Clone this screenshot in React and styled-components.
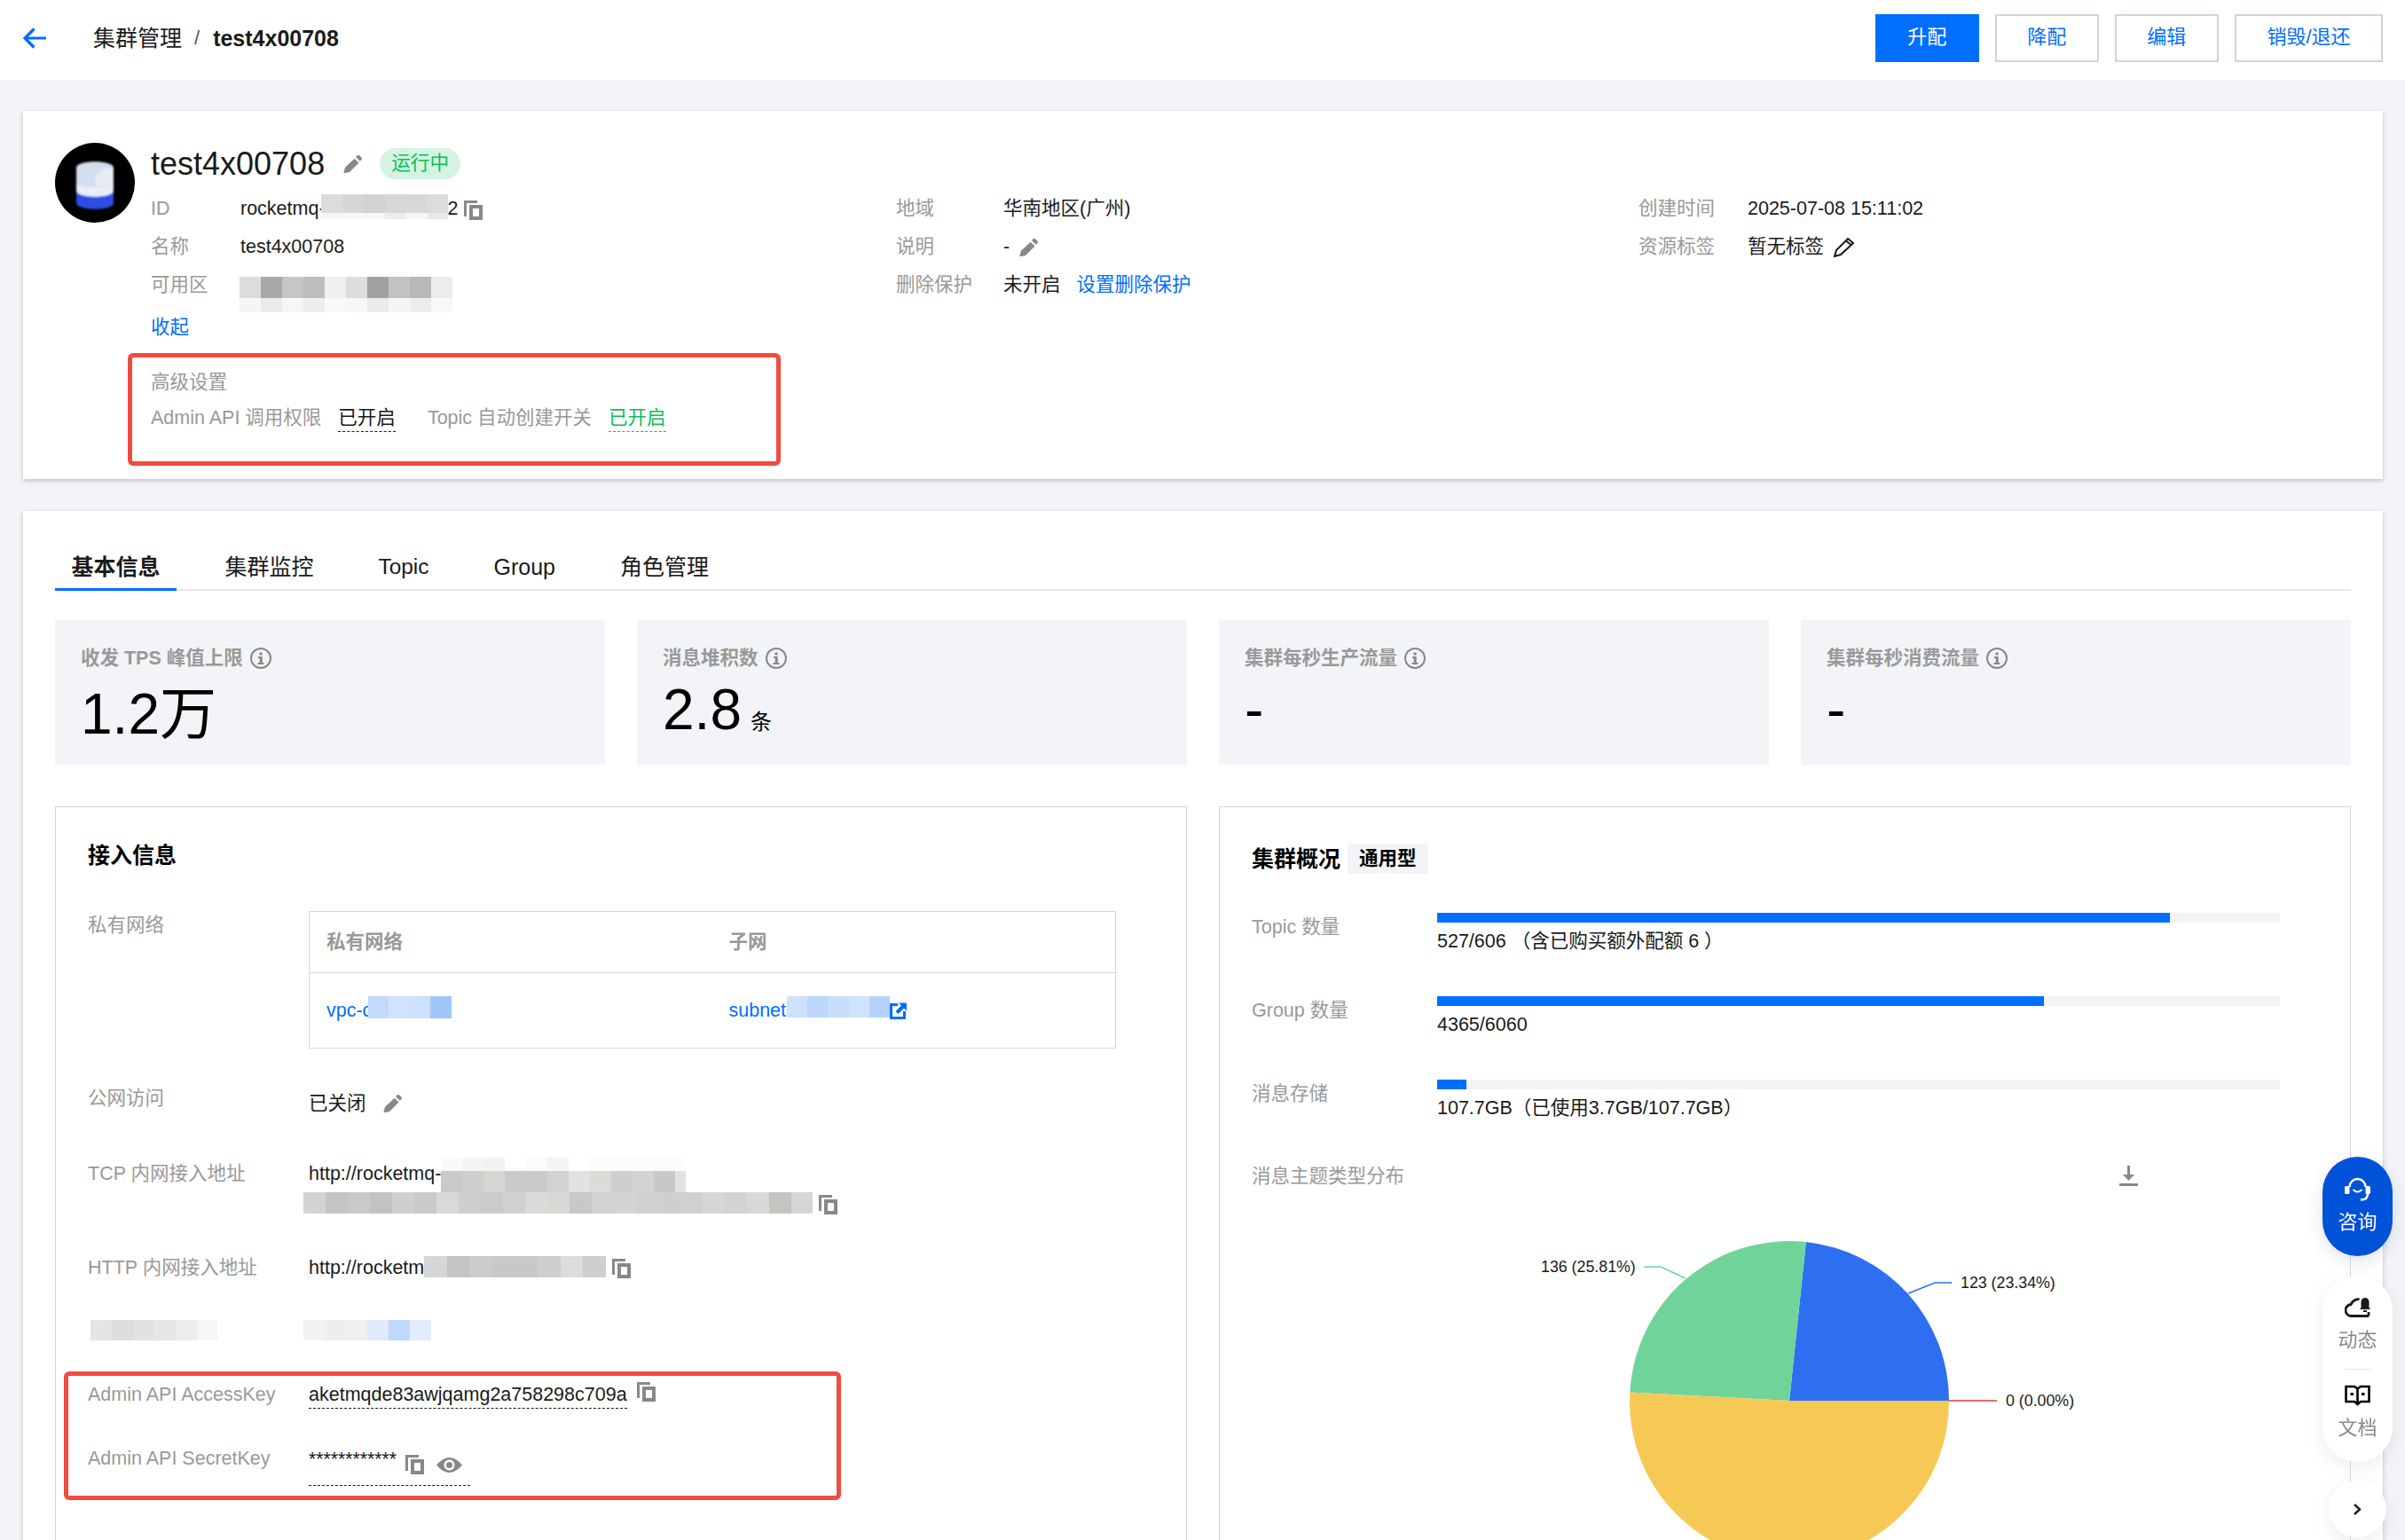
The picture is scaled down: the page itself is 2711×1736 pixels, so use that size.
import React from 'react';
import styled, { createGlobalStyle } from 'styled-components';

const GlobalStyle = createGlobalStyle`
	html, body {
		margin: 0;
		background: #f3f4f7;
	}
	body {
		font-family: "Liberation Sans", "Noto Sans CJK SC", sans-serif;
		font-size: 21.5px;
		color: #1a1a1a;
	}
	* {
		box-sizing: border-box;
	}
`;

const Page = styled.div`
	height: 1736px;
	overflow: hidden;
`;

const Header = styled.header`
	display: flex;
	align-items: center;
	height: 90px;
	padding: 0 25px 4px 26px;
	line-height: 30px;
	background: #fff;
`;

const BackArrow = styled.svg`
	width: 26px;
	height: 24px;
	margin-right: 53px;
`;

const Crumb = styled.span`
	font-size: 25px;
	font-weight: ${p => (p.$current ? 700 : 400)};
`;

const CrumbSep = styled.span`
	margin: 0 15px 0 14px;
	font-size: 22px;
	color: #555;
`;

const Actions = styled.div`
	display: flex;
	gap: 18px;
	margin-left: auto;
`;

const Button = styled.button`
	height: 54px;
	padding: 0 34.5px 3px;
	font: inherit;
	font-size: 22px;
	color: ${p => (p.$primary ? '#fff' : '#006eff')};
	background: ${p => (p.$primary ? '#006eff' : '#fff')};
	border: 2px solid ${p => (p.$primary ? '#006eff' : '#cfd5de')};
`;

const Main = styled.main`
	display: flex;
	flex-direction: column;
	gap: 36px;
	padding: 35px 25px 0 26px;
`;

const Card = styled.section`
	padding: ${p => p.$padding};
	background: #fff;
	box-shadow: 0 2px 5px rgba(54, 58, 80, 0.28);
`;

const Summary = styled.div`
	display: flex;
	gap: 18px;
`;

const Avatar = styled.svg`
	flex: none;
	width: 90px;
	height: 90px;
`;

const SummaryBody = styled.div`
	flex: 1;
	padding-top: 6px;
`;

const TitleRow = styled.div`
	display: flex;
	align-items: center;
	height: 35px;
	margin-bottom: 12px;
`;

const Title = styled.h1`
	margin: 0 21px 0 0;
	font-size: 36px;
	font-weight: 400;
	line-height: 35px;
`;

const StatusTag = styled.span`
	height: 35px;
	margin-left: 20px;
	padding: 0 13px;
	line-height: 34px;
	font-size: 21.7px;
	color: #0abf5b;
	background: #d5f3e1;
	border-radius: 18px;
`;

const InfoGrid = styled.div`
	display: grid;
	grid-template-columns: 840px 837px 1fr;
`;

const InfoRow = styled.div`
	display: flex;
	align-items: center;
	height: 43px;
	line-height: 43px;
`;

const InfoLabel = styled.span`
	flex: none;
	width: ${p => p.$width}px;
	color: #999;
`;

const InfoValue = styled.span`
	display: flex;
	align-items: center;
`;

const Link = styled.a`
	color: #006eff;
`;

const InlineLink = styled(Link)`
	margin-left: 18px;
`;

const Toggle = styled(Link)`
	display: block;
	margin-top: 5px;
	line-height: 43px;
`;

const Mosaic = styled.span`
	flex: none;
	display: block;
	align-self: flex-start;
	width: ${p => p.$width}px;
	height: ${p => p.$top + p.$bottom}px;
	margin: ${p => p.$margin || '0'};
	background:
		${p => p.$upper} 0 0 / 100% ${p => p.$top}px no-repeat,
		${p => p.$lower} 0 ${p => p.$top}px / 100% ${p => p.$bottom}px no-repeat;
`;

const Callout = styled.div`
	border: 5px solid #f04c40;
	border-radius: 6px;
`;

const SettingsCallout = styled(Callout)`
	width: 736px;
	height: 127px;
	margin: 7px 0 0 -26px;
	padding: 12.5px 0 0 21px;
`;

const SettingsTitle = styled.div`
	line-height: 30px;
	color: #999;
`;

const SettingsRow = styled.div`
	display: flex;
	align-items: flex-start;
	margin-top: 10px;
	color: #999;
	line-height: 30px;
`;

const DottedValue = styled.span`
	height: 31px;
	margin: 0 ${p => p.$after || 0}px 0 19px;
	color: ${p => p.$color || '#1a1a1a'};
	border-bottom: 1.5px dashed currentColor;
`;

const Tabs = styled.nav`
	display: flex;
	gap: 36px;
	margin-bottom: 33px;
	border-bottom: 2px solid #e7eaef;
`;

const Tab = styled.a`
	margin-bottom: -2px;
	padding: 0 18.5px 2px;
	font-size: ${p => p.$size || 25}px;
	font-weight: ${p => (p.$active ? 700 : 400)};
	line-height: 44px;
	border-bottom: 3px solid ${p => (p.$active ? '#006eff' : 'transparent')};
`;

const Stats = styled.div`
	display: grid;
	grid-template-columns: repeat(4, 1fr);
	gap: 36px;
	margin-bottom: 47px;
`;

const Stat = styled.div`
	height: 163px;
	padding: 28px 29px 0;
	background: #f3f4f7;
`;

const StatLabel = styled.div`
	display: flex;
	align-items: center;
	gap: 8px;
	font-weight: 700;
	line-height: 30px;
	color: #999;
`;

const StatValue = styled.div`
	display: flex;
	align-items: baseline;
	margin-top: ${p => p.$top || 11}px;
	font-size: 64px;
	line-height: 64px;
	color: #000;
`;

const StatUnit = styled.span`
	margin-left: 10px;
	font-size: 24px;
`;

const Panels = styled.div`
	display: grid;
	grid-template-columns: 1fr 1fr;
	gap: 36px;
`;

const Panel = styled.div`
	height: 900px;
	padding: ${p => p.$padding};
	border: 1px solid #d3d6de;
`;

const PanelTitle = styled.h2`
	display: flex;
	align-items: center;
	margin: 0 0 ${p => p.$bottom || 0}px;
	font-size: 25px;
	line-height: 34px;
	color: #000;
`;

const KindTag = styled.span`
	height: 34px;
	margin-left: 8px;
	padding: 0 13px;
	font-size: 21.5px;
	background: #f3f4f7;
`;

const FieldRow = styled.div`
	display: grid;
	grid-template-columns: 249px 1fr;
	margin-top: ${p => p.$top}px;
	line-height: 32px;
`;

const FieldLabel = styled.div`
	color: #999;
`;

const FieldValue = styled.div`
	display: flex;
	flex-wrap: wrap;
	align-items: ${p => p.$align || 'center'};
	padding-top: ${p => p.$nudge || 0}px;
`;

const NetTable = styled.table`
	width: 910px;
	height: 155px;
	table-layout: fixed;
	border-collapse: collapse;
	border: 1px solid #d3d6de;
	th, td {
		padding: 0 19px;
		text-align: left;
	}
	th {
		height: 69px;
		color: #999;
		border-bottom: 1px solid #d3d6de;
	}
	th:first-child {
		width: 454px;
	}
	td {
		color: #006eff;
	}
`;

const TableLink = styled.span`
	display: flex;
	align-items: center;
`;

const KeyCallout = styled(Callout)`
	width: 876px;
	height: 145px;
	margin: 35px 0 0 -27px;
	padding: 5.5px 0 0 22px;
`;

const KeyText = styled.span`
	height: 32px;
	border-bottom: 1.5px dashed #1a1a1a;
`;

const SecretValue = styled.span`
	display: flex;
	align-items: flex-start;
	gap: 10px;
	width: 182px;
	height: 47px;
	padding-top: 1px;
	border-bottom: 1.5px dashed #1a1a1a;
`;

const Stars = styled.span`
	font-size: 21.2px;
`;

const Usage = styled.div`
	display: grid;
	grid-template-columns: 209px 950px;
	height: 94px;
	line-height: 32px;
`;

const Track = styled.div`
	height: 11px;
	background: #f3f4f7;
`;

const Fill = styled.div`
	height: 100%;
	background: #006eff;
`;

const UsageText = styled.div`
	margin-top: 6px;
	line-height: 30px;
`;

const ChartHead = styled.div`
	display: flex;
	justify-content: space-between;
	width: 999px;
	margin-top: -1px;
	line-height: 32px;
	color: #999;
`;

const PieChart = styled.svg`
	display: block;
	width: 1150px;
	height: 500px;
	text {
		font-family: "Liberation Sans", sans-serif;
		font-size: 17.8px;
		fill: #1a1a1a;
	}
`;

const Dock = styled.aside`
	position: fixed;
	top: 1304px;
	right: 14px;
	display: flex;
	flex-direction: column;
	align-items: center;
	width: 79px;
`;

const ConsultButton = styled.div`
	display: flex;
	flex-direction: column;
	align-items: center;
	width: 79px;
	height: 112px;
	padding-top: 22px;
	font-size: 22px;
	line-height: 30px;
	color: #fff;
	background: #0052d9;
	border-radius: 40px;
	box-shadow: 0 6px 20px rgba(0, 40, 120, 0.12);
`;

const ToolPill = styled.div`
	display: flex;
	flex-direction: column;
	align-items: center;
	width: 79px;
	height: 210px;
	margin-top: 22px;
	padding-top: 25px;
	font-size: 22px;
	line-height: 30px;
	color: #888;
	background: #fff;
	border-radius: 40px;
	box-shadow: 0 6px 24px rgba(0, 20, 60, 0.08);
`;

const ToolDivider = styled.div`
	width: 29px;
	height: 1px;
	margin: 17px 0;
	background: #e7eaef;
`;

const ToolLabel = styled.span`
	margin-top: ${p => p.$top}px;
`;

const CollapseButton = styled.div`
	display: flex;
	align-items: center;
	justify-content: center;
	width: 65px;
	height: 64px;
	margin-top: 21px;
	background: #fff;
	border-radius: 50%;
	box-shadow: 0 6px 24px rgba(0, 20, 60, 0.08);
`;

const Icon = styled.svg`
	flex: none;
	display: block;
	width: ${p => p.$w}px;
	height: ${p => p.$h}px;
	margin: ${p => p.$margin || '0'};
`;

const stripes = (colors, cell = 24) =>
	`linear-gradient(90deg, ${colors
		.map((c, i) => `${c} ${i * cell}px ${(i + 1) * cell}px`)
		.join(', ')})`;

const BLANK = stripes(['#fff']);

const CopyIcon = ({ margin }) => (
	<Icon $w={21} $h={22} $margin={margin} viewBox="0 0 21 22">
		<path fill="#888" d="M0 0h15v3H3v15H0z" />
		<path fill="#888" fillRule="evenodd" d="M6 5h15v17H6zM10 9v9h7V9z" />
	</Icon>
);

const PencilIcon = ({ margin }) => (
	<Icon $w={21} $h={20} $margin={margin} viewBox="0 0 21 20">
		<path fill="#888" d="M15.500.500a2 2 0 0 1 2.800 0l2 2a2 2 0 0 1 0 2.800l-1.500 1.500-4.800-4.800z" />
		<path fill="#888" d="M12.700 3.700l4.800 4.800L7 19 1.500 20.200a.8.8 0 0 1-1-1L2 13.700z" />
	</Icon>
);

const InfoIcon = () => (
	<Icon $w={24} $h={24} viewBox="0 0 24 24">
		<circle cx="12" cy="12" r="11" fill="none" stroke="#888" strokeWidth="2" />
		<rect x="10.500" y="5.500" width="3" height="3" fill="#888" />
		<path fill="#888" d="M9 10h4.700v7H15.500v2H8.500v-2h2.200v-5H9z" />
	</Icon>
);

const PIE_COLORS = { blue: '#2e6ff2', green: '#70d49a', yellow: '#f6c955', red: '#ee6b60' };

export default function App() {
	return (
		<Page>
			<GlobalStyle />
			<Header>
				<BackArrow viewBox="0 0 26 24">
					<path d="M12.500 1.500L2 12l10.500 10.500M2 12h24" fill="none" stroke="#006eff" strokeWidth="3.200" />
				</BackArrow>
				<Crumb>集群管理</Crumb>
				<CrumbSep>/</CrumbSep>
				<Crumb $current>test4x00708</Crumb>
				<Actions>
					<Button $primary>升配</Button>
					<Button>降配</Button>
					<Button>编辑</Button>
					<Button>销毁/退还</Button>
				</Actions>
			</Header>

			<Main>
				<Card $padding="36px 36px 15px 36px">
					<Summary>
						<Avatar viewBox="0 0 90 90">
							<defs>
								<filter id="soft"><feGaussianBlur stdDeviation="0.8" /></filter>
							</defs>
							<circle cx="45" cy="45" r="45" fill="#000" />
							<g filter="url(#soft)">
								<path d="M24 52v16c0 9 42 9 42 0V52z" fill="#2c50e2" />
								<path d="M24 40v14c0 9 42 9 42 0V40z" fill="#e9edf6" />
								<path d="M24 28v16c0 8 42 8 42 0V28c0-9-42-9-42 0z" fill="#d3deef" />
								<path d="M45 48c0-10 2-18 21-20v16c0 3-10 5-21 4z" fill="#e6ecf6" />
							</g>
						</Avatar>
						<SummaryBody>
							<TitleRow>
								<Title>test4x00708</Title>
								<PencilIcon />
								<StatusTag>运行中</StatusTag>
							</TitleRow>
							<InfoGrid>
								<div>
									<InfoRow>
										<InfoLabel $width={101}>ID</InfoLabel>
										<InfoValue>
											rocketmq-
											<Mosaic
												$width={143}
												$top={21}
												$bottom={7}
												$margin="5px 0 0 -5px"
												$upper={stripes(['#dcdcdc', '#d6d6d6', '#d2d2d2', '#d8d6d6', '#d6d7da', '#dcdcdc'])}
												$lower={stripes(['#f5f5f5', '#f7f7f7', '#f5f5f5', '#ececec', '#f5f5f5', '#e8e8e8'])}
											/>
											2
											<CopyIcon margin="3px 0 0 6px" />
										</InfoValue>
									</InfoRow>
									<InfoRow>
										<InfoLabel $width={101}>名称</InfoLabel>
										<InfoValue>test4x00708</InfoValue>
									</InfoRow>
									<InfoRow>
										<InfoLabel $width={100}>可用区</InfoLabel>
										<Mosaic
											$width={240}
											$top={24}
											$bottom={16}
											$margin="12px 0 0 0"
											$upper={stripes(['#dcdcdc', '#a9a9ac', '#c6c6c9', '#bdbdbb', '#eeeff3', '#dddddf', '#a2a2a5', '#c2c2c5', '#b8b8ba', '#ebecf0'])}
											$lower={stripes(['#f5f5f6', '#ebebed', '#f6f6f7', '#ededee', '#f9f9fa', '#f7f7f8', '#ebebed', '#f5f5f6', '#ececee', '#f8f8f9'])}
										/>
									</InfoRow>
								</div>
								<div>
									<InfoRow>
										<InfoLabel $width={121}>地域</InfoLabel>
										<InfoValue>华南地区(广州)</InfoValue>
									</InfoRow>
									<InfoRow>
										<InfoLabel $width={121}>说明</InfoLabel>
										<InfoValue>-<PencilIcon margin="0 0 0 11px" /></InfoValue>
									</InfoRow>
									<InfoRow>
										<InfoLabel $width={121}>删除保护</InfoLabel>
										<InfoValue>未开启<InlineLink>设置删除保护</InlineLink></InfoValue>
									</InfoRow>
								</div>
								<div>
									<InfoRow>
										<InfoLabel $width={123}>创建时间</InfoLabel>
										<InfoValue>2025-07-08 15:11:02</InfoValue>
									</InfoRow>
									<InfoRow>
										<InfoLabel $width={123}>资源标签</InfoLabel>
										<InfoValue>
											暂无标签
											<Icon $w={25} $h={23} $margin="0 0 0 10px" viewBox="0 0 25 23">
												<path d="M17 2l6 5L9 20l-7 2 2-7zM15 4.500l6 5" fill="none" stroke="#1a1a1a" strokeWidth="2" />
											</Icon>
										</InfoValue>
									</InfoRow>
								</div>
							</InfoGrid>
							<Toggle>收起</Toggle>
							<SettingsCallout>
								<SettingsTitle>高级设置</SettingsTitle>
								<SettingsRow>
									Admin API 调用权限
									<DottedValue $after={36}>已开启</DottedValue>
									Topic 自动创建开关
									<DottedValue $color="#0abf5b">已开启</DottedValue>
								</SettingsRow>
							</SettingsCallout>
						</SummaryBody>
					</Summary>
				</Card>

				<Card $padding="41px 36px 0 36px">
					<Tabs>
						<Tab $active>基本信息</Tab>
						<Tab>集群监控</Tab>
						<Tab $size={24.4}>Topic</Tab>
						<Tab>Group</Tab>
						<Tab>角色管理</Tab>
					</Tabs>

					<Stats>
						<Stat>
							<StatLabel>收发 TPS 峰值上限<InfoIcon /></StatLabel>
							<StatValue $top={16}>1.2万</StatValue>
						</Stat>
						<Stat>
							<StatLabel>消息堆积数<InfoIcon /></StatLabel>
							<StatValue>2.8<StatUnit>条</StatUnit></StatValue>
						</Stat>
						<Stat>
							<StatLabel>集群每秒生产流量<InfoIcon /></StatLabel>
							<StatValue>-</StatValue>
						</Stat>
						<Stat>
							<StatLabel>集群每秒消费流量<InfoIcon /></StatLabel>
							<StatValue>-</StatValue>
						</Stat>
					</Stats>

					<Panels>
						<Panel $padding="37px 36px">
							<PanelTitle>接入信息</PanelTitle>
							<FieldRow $top={46}>
								<FieldLabel>私有网络</FieldLabel>
								<NetTable>
									<thead>
										<tr>
											<th>私有网络</th>
											<th>子网</th>
										</tr>
									</thead>
									<tbody>
										<tr>
											<td>
												<TableLink>
													vpc-c
													<Mosaic
														$width={94}
														$top={25}
														$bottom={0}
														$margin="0 0 0 -4px"
														$upper={stripes(['#c3dafc', '#d0e2fd', '#cde0fd', '#a0c6fb'], 23.5)}
														$lower={BLANK}
													/>
												</TableLink>
											</td>
											<td>
												<TableLink>
													subnet-
													<Mosaic
														$width={116}
														$top={24}
														$bottom={0}
														$margin="0 0 0 -6px"
														$upper={stripes(['#cee1fe', '#bcd6fd', '#c9defd', '#d0e3fe', '#b6d2fc'], 23.2)}
														$lower={BLANK}
													/>
													<Icon $w={19} $h={19} viewBox="0 0 19 19">
														<path fill="#006eff" d="M0 1h9v3H3v12h12v-6h3v9H0z" />
														<path fill="#006eff" d="M10 .500h9v9l-3-3-6.500 6.500-3-3 6.500-6.500z" />
													</Icon>
												</TableLink>
											</td>
										</tr>
									</tbody>
								</NetTable>
							</FieldRow>

							<FieldRow $top={39.5}>
								<FieldLabel>公网访问</FieldLabel>
								<FieldValue $nudge={6}>已关闭<PencilIcon margin="0 0 0 19px" /></FieldValue>
							</FieldRow>

							<FieldRow $top={47.5}>
								<FieldLabel>TCP 内网接入地址</FieldLabel>
								<FieldValue $align="flex-start">
									http://rocketmq-
									<Mosaic
										$width={276}
										$top={15}
										$bottom={24}
										$margin="-2.5px 0 0 0"
										$upper={stripes(['#fafafa', '#f4f4f4', '#f2f2f2', '#fff', '#fbfbfb', '#f4f4f4', '#fff', '#fcfcfc'])}
										$lower={stripes(['#c9c9c9', '#cfcfcd', '#d6d6d3', '#c9cbc9', '#c9cbc9', '#d2d2d0', '#e1e2e5', '#dbdbd8', '#cfcfd1', '#d3d3d3', '#c8c8c8', '#e2e2e4'])}
									/>
									<Mosaic
										$width={574}
										$top={24}
										$bottom={0}
										$margin="0 0 0 -6px"
										$upper={stripes(['#d3d3d1', '#c4c4c4', '#c9c9c7', '#c2c2c0', '#cfcfd1', '#cacaca', '#d9d9db', '#cfcfd0', '#cbcbcb', '#d1d1d1', '#dadada', '#d8d8d4', '#c8c8c8', '#d2d2d2', '#d4d4d4', '#d1d1d1', '#cfcfcf', '#d0d0d0', '#d6d6d8', '#d3d3d5', '#d8d8d8', '#c4c4c0', '#d6d6d8'], 25)}
										$lower={BLANK}
									/>
									<CopyIcon margin="3px 0 0 7px" />
								</FieldValue>
							</FieldRow>

							<FieldRow $top={44}>
								<FieldLabel>HTTP 内网接入地址</FieldLabel>
								<FieldValue $align="flex-start">
									http://rocketm
									<Mosaic
										$width={205}
										$top={24}
										$bottom={0}
										$margin="3px 0 0 0"
										$upper={stripes(['#d6d6d6', '#c4c4c4', '#cccccc', '#c8c8c8', '#c8c8c8', '#cfcfcd', '#dcdcde', '#cfcfcf'], 25.6)}
										$lower={BLANK}
									/>
									<CopyIcon margin="6px 0 0 7px" />
								</FieldValue>
							</FieldRow>

							<FieldRow $top={39}>
								<FieldLabel>
									<Mosaic
										$width={143}
										$top={23}
										$bottom={0}
										$margin="4px 0 0 3px"
										$upper={stripes(['#e4e4e4', '#dddddd', '#e2e2e2', '#e6e6e6', '#ececec', '#f6f6f6'])}
										$lower={BLANK}
									/>
								</FieldLabel>
								<FieldValue>
									<Mosaic
										$width={144}
										$top={23}
										$bottom={0}
										$margin="4px 0 0 -6px"
										$upper={stripes(['#f2f2f2', '#eeeeee', '#eef0f2', '#e0eafc', '#c0d8fd', '#e2ecfd'])}
										$lower={BLANK}
									/>
								</FieldValue>
							</FieldRow>

							<KeyCallout>
								<FieldRow $top={0}>
									<FieldLabel>Admin API AccessKey</FieldLabel>
									<FieldValue $align="flex-start">
										<KeyText>aketmqde83awjqamg2a758298c709a</KeyText>
										<CopyIcon margin="2px 0 0 11px" />
									</FieldValue>
								</FieldRow>
								<FieldRow $top={40}>
									<FieldLabel>Admin API SecretKey</FieldLabel>
									<FieldValue>
										<SecretValue>
											<Stars>************</Stars>
											<CopyIcon margin="11px 0 0 0" />
											<Icon $w={29} $h={17} $margin="14px 0 0 4px" viewBox="0 0 29 17">
												<path fill="#888" d="M0 8.500Q14.500-8.500 29 8.500 14.500 25.500 0 8.500z" />
												<circle cx="14.500" cy="8.500" r="6" fill="#fff" />
												<circle cx="14.500" cy="8.500" r="3.500" fill="#888" />
											</Icon>
										</SecretValue>
									</FieldValue>
								</FieldRow>
							</KeyCallout>
						</Panel>

						<Panel $padding="41px 36px">
							<PanelTitle $bottom={44}>
								集群概况
								<KindTag>通用型</KindTag>
							</PanelTitle>
							<Usage>
								<FieldLabel>Topic 数量</FieldLabel>
								<div>
									<Track><Fill style={{ width: `${(527 / 606) * 100}%` }} /></Track>
									<UsageText>527/606 （含已购买额外配额 6 ）</UsageText>
								</div>
							</Usage>
							<Usage>
								<FieldLabel>Group 数量</FieldLabel>
								<div>
									<Track><Fill style={{ width: `${(4365 / 6060) * 100}%` }} /></Track>
									<UsageText>4365/6060</UsageText>
								</div>
							</Usage>
							<Usage>
								<FieldLabel>消息存储</FieldLabel>
								<div>
									<Track><Fill style={{ width: `${(3.7 / 107.7) * 100}%` }} /></Track>
									<UsageText>107.7GB（已使用3.7GB/107.7GB）</UsageText>
								</div>
							</Usage>
							<ChartHead>
								消息主题类型分布
								<Icon $w={21} $h={23} $margin="4px 0 0 0" viewBox="0 0 21 23">
									<path fill="#888" d="M9 0h3v10h5l-6.500 7L4 10h5zM0 20h21v3H0z" />
								</Icon>
							</ChartHead>
							<PieChart viewBox="0 4 1150 500">
								<path fill={PIE_COLORS.blue} d="M606 241L786 241A180 180 0 0 0 624.800 62Z" />
								<path fill={PIE_COLORS.green} d="M606 241L624.800 62A180 180 0 0 0 426.300 231.400Z" />
								<path fill={PIE_COLORS.yellow} d="M606 241L426.300 231.400A180 180 0 1 0 786 241Z" />
								<path fill="none" stroke={PIE_COLORS.green} strokeWidth="1.500" d="M442 90H461L489 103" />
								<path fill="none" stroke={PIE_COLORS.blue} strokeWidth="1.500" d="M740 120L770 108H789" />
								<path fill="none" stroke={PIE_COLORS.red} strokeWidth="2" d="M786 241H840" />
								<text x="326" y="96">136 (25.81%)</text>
								<text x="799" y="114">123 (23.34%)</text>
								<text x="850" y="247">0 (0.00%)</text>
							</PieChart>
						</Panel>
					</Panels>
				</Card>
			</Main>

			<Dock>
				<ConsultButton>
					<Icon $w={29} $h={28} viewBox="0 0 29 28">
						<path d="M5.500 12a9 9 0 0 1 18 0" fill="none" stroke="#fff" strokeWidth="2.500" />
						<rect x="0" y="11" width="5.500" height="9" rx="1.500" fill="#fff" />
						<rect x="23.500" y="11" width="5.500" height="9" rx="1.500" fill="#fff" />
						<path d="M9.500 15q5 5 10 0" fill="none" stroke="#fff" strokeWidth="2" />
						<path d="M26 20q0 6.500-8 6.500" fill="none" stroke="#fff" strokeWidth="2.500" />
					</Icon>
					<ToolLabel $top={9}>咨询</ToolLabel>
				</ConsultButton>
				<ToolPill>
					<Icon $w={29} $h={23} viewBox="0 0 29 23">
						<path d="M27 20.500H8a6.500 6.500 0 0 1-1-13C9 3 12 1.500 16.500 1.500" fill="none" stroke="#1a1a1a" strokeWidth="2.800" />
						<path d="M27 16v4.500" fill="none" stroke="#1a1a1a" strokeWidth="2.800" />
						<path fill="#1a1a1a" d="M23 0a4.500 4.500 0 0 1 4.500 4.500V11l1.500 2H17l1.500-2V4.500A4.500 4.500 0 0 1 23 0zM21 14h4v2h-4z" />
					</Icon>
					<ToolLabel $top={10}>动态</ToolLabel>
					<ToolDivider />
					<Icon $w={29} $h={24} viewBox="0 0 29 24">
						<path d="M1.500 2H11l3.500 2.500L18 2h9.500v17H18l-3.500 3-3.500-3H1.500zM14.500 4.500V22" fill="none" stroke="#000" strokeWidth="2.600" />
						<path fill="#000" d="M6.500 9h3.500v3H6.500zM19 9h3.500v3H19z" />
					</Icon>
					<ToolLabel $top={10}>文档</ToolLabel>
				</ToolPill>
				<CollapseButton>
					<Icon $w={9} $h={13} viewBox="0 0 9 13">
						<path d="M1 1l6 5.500L1 12" fill="none" stroke="#1a1a1a" strokeWidth="2.400" />
					</Icon>
				</CollapseButton>
			</Dock>
		</Page>
	);
}
